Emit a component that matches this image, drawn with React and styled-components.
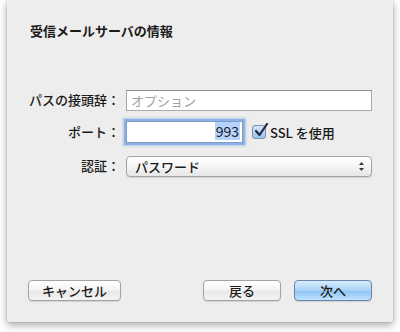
import React from 'react';
import styled, { createGlobalStyle } from 'styled-components';

const Global = createGlobalStyle`
  html, body { margin: 0; padding: 0; background: #fff; }
  body { font-family: "Noto Sans CJK JP", "Noto Sans", sans-serif; color: #1a1a1a; }
`;

const Page = styled.div`
  width: 400px;
  height: 332px;
  padding: 0 7px;
  box-sizing: border-box;
`;

const Sheet = styled.div`
  height: 322px;
  background: #ededed;
  box-shadow: 0 3px 8px rgba(0, 0, 0, 0.35), 0 0 1px rgba(0, 0, 0, 0.3);
  display: flex;
  flex-direction: column;
  padding: 21px 21px 21px 21px;
  box-sizing: border-box;
`;

const Title = styled.div`
  font-size: 13px;
  font-weight: 700;
  line-height: 20px;
  padding-left: 2px;
`;

const Form = styled.div`
  margin-top: 48px;
  display: grid;
  grid-template-columns: 92px 1fr;
  column-gap: 6px;
  row-gap: 10px;
  align-items: center;
`;

const Label = styled.div`
  font-size: 13px;
  font-weight: 500;
  text-align: right;
  line-height: 22px;
  margin-top: ${p => p.$mt || 0}px;
`;

const Field = styled.div`
  height: 21px;
  background: #fff;
  border: 1px solid #a9a9a9;
  border-top-color: #8e8e8e;
  box-sizing: border-box;
  font-size: 13px;
  line-height: 19px;
  padding: 0 4px;
  color: ${p => (p.$placeholder ? '#a0a0a0' : '#1a1a1a')};
`;

const PortRow = styled.div`
  display: flex;
  align-items: center;
  gap: 9px;
`;

const PortField = styled(Field)`
  width: 117px;
  height: 22px;
  text-align: right;
  padding: 0 2px;
  font-size: 14px;
  border-color: #7e9cc4;
  box-shadow: 0 0 0 2px #8db3e6, 0 0 2px 3px rgba(120, 165, 225, 0.5);
`;

const Selected = styled.span`
  background: #b5d3fb;
  display: inline-block;
  line-height: 18px;
  padding: 0 1px;
`;

const Check = styled.label`
  display: flex;
  align-items: center;
  gap: 4px;
  font-size: 13px;
  font-weight: 500;
`;

const Box = styled.span`
  width: 14px;
  height: 14px;
  border: 1px solid #7f8fa6;
  border-radius: 3px;
  background: linear-gradient(#d5e6fb, #9dc2ef);
  box-sizing: border-box;
  position: relative;
  svg { position: absolute; left: 1px; top: -3px; }
`;

const Popup = styled.div`
  height: 21px;
  margin-top: 2px;
  border: 1px solid #a3a3a3;
  border-radius: 4px;
  background: linear-gradient(#ffffff, #f2f2f2 60%, #e6e6e6);
  box-shadow: 0 1px 1px rgba(0, 0, 0, 0.12);
  box-sizing: border-box;
  display: flex;
  align-items: center;
  justify-content: space-between;
  padding: 0 6px 0 8px;
  font-size: 13px;
  font-weight: 500;
`;

const Spacer = styled.div`
  flex: 1;
`;

const Buttons = styled.div`
  display: flex;
  align-items: center;
`;

const Button = styled.div`
  width: ${p => p.$w}px;
  height: 21px;
  border: 1px solid ${p => (p.$primary ? '#6a85ad' : '#a3a3a3')};
  border-radius: 4px;
  box-sizing: border-box;
  font-size: 13px;
  font-weight: 500;
  display: flex;
  align-items: center;
  justify-content: center;
  margin-left: ${p => p.$ml || 0}px;
  background: ${p =>
    p.$primary
      ? 'linear-gradient(#d8ecfd, #a9d2f7 50%, #8cc3f4 51%, #bfe3fd)'
      : 'linear-gradient(#ffffff, #f3f3f3 50%, #e8e8e8 51%, #f3f3f3)'};
  box-shadow: 0 1px 1px rgba(0, 0, 0, 0.12);
`;

export default function App() {
  return (
    <>
      <Global />
      <Page>
        <Sheet>
          <Title>受信メールサーバの情報</Title>
          <Form>
            <Label>パスの接頭辞：</Label>
            <Field $placeholder>オプション</Field>
            <Label>ポート：</Label>
            <PortRow>
              <PortField><Selected>993</Selected></PortField>
              <Check>
                <Box>
                  <svg width="15" height="15" viewBox="0 0 15 15">
                    <path d="M2 8 L5.5 12 L13 1" fill="none" stroke="#1c2a44" strokeWidth="2.2" strokeLinecap="round" strokeLinejoin="round" />
                  </svg>
                </Box>
                SSL を使用
              </Check>
            </PortRow>
            <Label $mt={2}>認証：</Label>
            <Popup>
              パスワード
              <svg width="7" height="11" viewBox="0 0 7 11">
                <path d="M3.5 1 L6 4 H1 Z M3.5 10 L6 7 H1 Z" fill="#3a3a3a" />
              </svg>
            </Popup>
          </Form>
          <Spacer />
          <Buttons>
            <Button $w={93}>キャンセル</Button>
            <Button $w={78} $ml={82}>戻る</Button>
            <Button $w={78} $ml={13} $primary>次へ</Button>
          </Buttons>
        </Sheet>
      </Page>
    </>
  );
}
